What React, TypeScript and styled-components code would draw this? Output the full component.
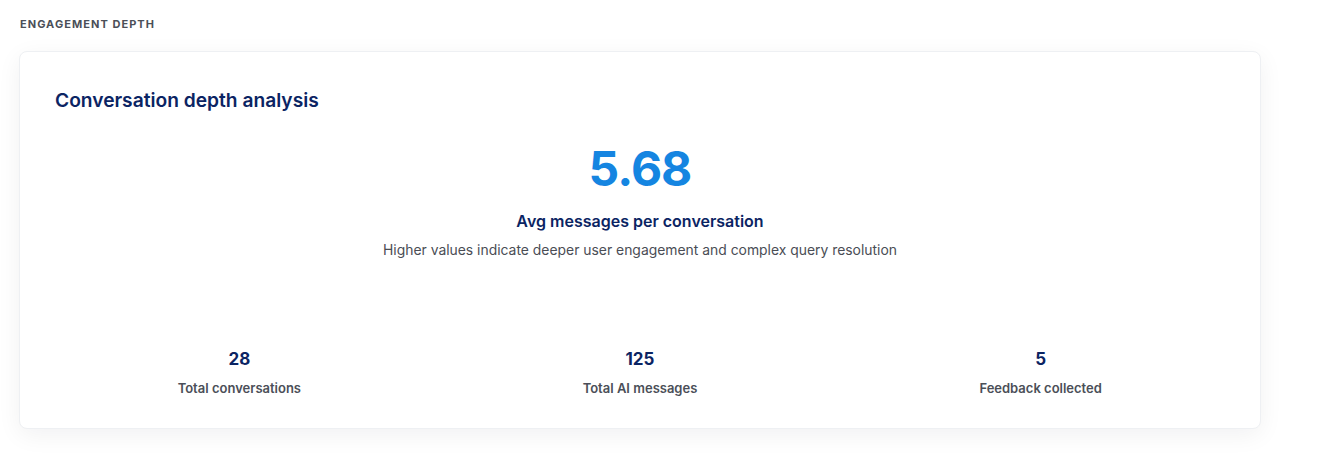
import React from 'react';
import styled, { createGlobalStyle } from 'styled-components';

const GlobalStyle = createGlobalStyle`
  html, body {
    margin: 0;
    padding: 0;
    background: #ffffff;
    font-family: Inter, 'Noto Sans', 'Liberation Sans', sans-serif;
  }
`;

interface Stat {
  value: string;
  label: string;
}

const stats: Stat[] = [
  { value: '28', label: 'Total conversations' },
  { value: '125', label: 'Total AI messages' },
  { value: '5', label: 'Feedback collected' },
];

const Page = styled.div`
  padding: 16px 69px 24px 19px;
`;

const SectionLabel = styled.h3`
  margin: 0 0 19px 1px;
  font-size: 11px;
  line-height: 16px;
  font-weight: 700;
  letter-spacing: 0.095em;
  text-transform: uppercase;
  color: #4b4f58;
`;

const Card = styled.div`
  background: #ffffff;
  border: 1px solid #eef0f3;
  border-radius: 8px;
  box-shadow: 0 6px 24px rgba(15, 23, 42, 0.06);
  padding: 36px 35px 31px;
  height: 378px;
  box-sizing: border-box;
  display: flex;
  flex-direction: column;
`;

const CardTitle = styled.h2`
  margin: 0;
  font-size: 19.2px;
  line-height: 24px;
  font-weight: 600;
  color: #0b2463;
`;

const Headline = styled.div`
  display: flex;
  flex-direction: column;
  align-items: center;
  margin-top: 25px;
`;

const BigNumber = styled.div`
  font-size: 48px;
  line-height: 64px;
  font-weight: 700;
  letter-spacing: -0.02em;
  color: #1585e1;
`;

const MetricName = styled.div`
  margin-top: 9px;
  font-size: 16px;
  line-height: 22px;
  font-weight: 600;
  color: #0b2463;
`;

const MetricHint = styled.div`
  margin-top: 8px;
  font-size: 13.9px;
  line-height: 20px;
  color: #4a4d55;
`;

const StatsRow = styled.div`
  margin-top: auto;
  display: grid;
  grid-template-columns: repeat(3, 1fr);
  gap: 32px;
`;

const StatCell = styled.div`
  display: flex;
  flex-direction: column;
  align-items: center;
`;

const StatValue = styled.div`
  font-size: 17px;
  line-height: 22px;
  font-weight: 700;
  color: #0b2463;
`;

const StatLabel = styled.div`
  margin-top: 9px;
  font-size: 13px;
  line-height: 18px;
  font-weight: 600;
  color: #4b4f58;
`;

const App: React.FC = () => (
  <>
    <GlobalStyle />
    <Page>
      <SectionLabel>Engagement depth</SectionLabel>
      <Card>
        <CardTitle>Conversation depth analysis</CardTitle>
        <Headline>
          <BigNumber>5.68</BigNumber>
          <MetricName>Avg messages per conversation</MetricName>
          <MetricHint>
            Higher values indicate deeper user engagement and complex query resolution
          </MetricHint>
        </Headline>
        <StatsRow>
          {stats.map((s) => (
            <StatCell key={s.label}>
              <StatValue>{s.value}</StatValue>
              <StatLabel>{s.label}</StatLabel>
            </StatCell>
          ))}
        </StatsRow>
      </Card>
    </Page>
  </>
);

export default App;
